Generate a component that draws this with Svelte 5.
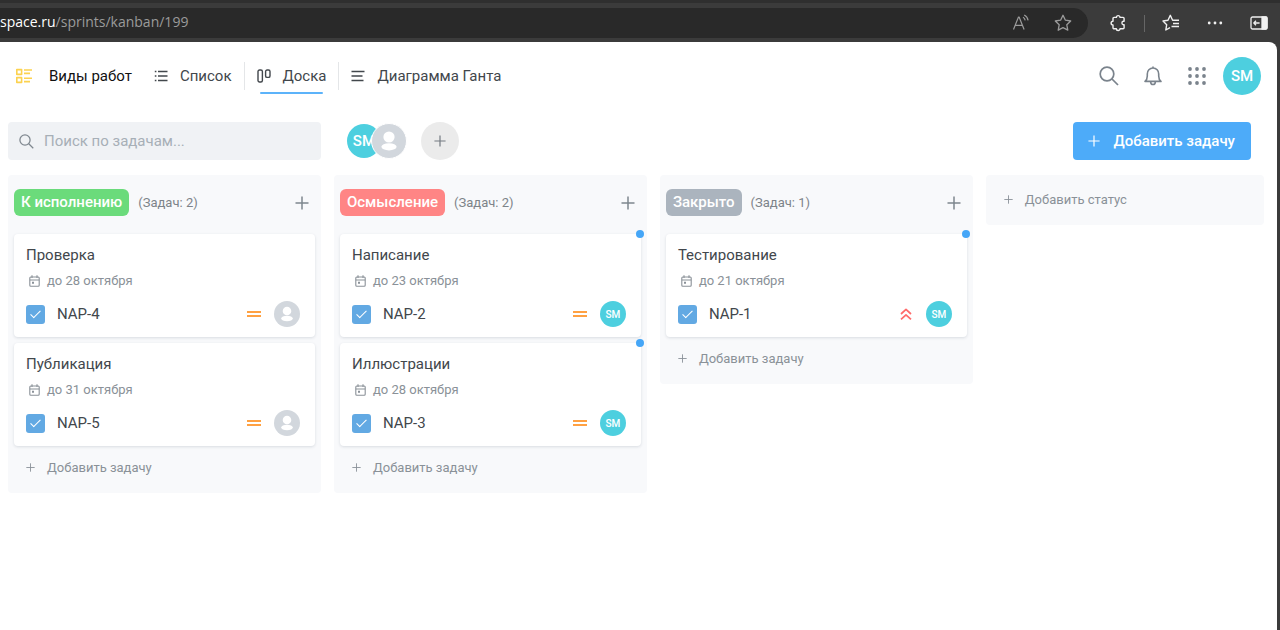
<script>
    const views = [
        { icon: "list", label: "Список" },
        { icon: "board", label: "Доска", active: true },
        { icon: "gantt", label: "Диаграмма Ганта" },
    ];

    let columns = [
        {
            title: "К исполнению",
            color: "#6bdb7b",
            tasks: [
                { id: "NAP-4", title: "Проверка", due: "28 октября", priority: "medium" },
                { id: "NAP-5", title: "Публикация", due: "31 октября", priority: "medium" },
            ],
        },
        {
            title: "Осмысление",
            color: "#ff8585",
            tasks: [
                { id: "NAP-2", title: "Написание", due: "23 октября", priority: "medium", user: "SM", unread: true },
                { id: "NAP-3", title: "Иллюстрации", due: "28 октября", priority: "medium", user: "SM", unread: true },
            ],
        },
        {
            title: "Закрыто",
            color: "#abb4be",
            tasks: [
                { id: "NAP-1", title: "Тестирование", due: "21 октября", priority: "high", user: "SM", unread: true },
            ],
        },
    ];
</script>

{#snippet plus(size)}
    <svg class="icon" width={size} height={size} viewBox="0 0 14 14" stroke-width={size > 12 ? 1.5 : 1.4}>
        <path d="M7 .5v13M.5 7h13" />
    </svg>
{/snippet}

{#snippet magnifier(size)}
    <svg class="icon" width={size} height={size} viewBox="0 0 20 20" stroke-width="1.7">
        <circle cx="8" cy="8" r="6.8" />
        <path d="M13 13l6 6" />
    </svg>
{/snippet}

{#snippet avatar(user, size)}
    <span class="avatar {size}" class:nobody={!user}>
        {#if user}
            {user}
        {:else}
            <svg width="100%" height="100%" viewBox="0 0 34 34" fill="#fff">
                <circle cx="17" cy="13" r="5.6" />
                <ellipse cx="17" cy="22.8" rx="7.6" ry="3.6" />
            </svg>
        {/if}
    </span>
{/snippet}

<div class="browser">
    <div class="browser-bar">
        <div class="address">
            <span class="url"><b>space.ru</b>/sprints/kanban/199</span>
            <button aria-label="Прочесть вслух">
                <svg class="icon" width="18" height="18" viewBox="0 0 18 18" stroke-width="1.2">
                    <path d="M1.5 15.5L6.5 3h.6l5 12.5M3.3 11.3h7M11 3.2c1.2.7 1.9 1.7 2.2 3.1M12.2 1c2.2 1.1 3.5 2.9 3.9 5.3" />
                </svg>
            </button>
            <button aria-label="В избранное">
                <svg class="icon" width="18" height="18" viewBox="0 0 18 18" stroke-width="1.3">
                    <path d="M9 1.3l2.4 4.9 5.3.8-3.9 3.8 1 5.4L9 13.7l-4.8 2.5 1-5.4L1.3 7l5.3-.8z" />
                </svg>
            </button>
        </div>
        <div class="browser-tools">
            <button aria-label="Расширения">
                <svg class="icon" width="18" height="18" viewBox="0 0 18 18" stroke-width="1.4">
                    <path d="M5 3.4h2.4a1.8 1.8 0 0 1 3.600 0h3.100a1 1 0 0 1 1 1v2.900h-.8a1.800 1.800 0 0 0 0 3.500h.8v2.900a1 1 0 0 1-1 1H11a1.800 1.800 0 0 1-3.600 0H5a1 1 0 0 1-1-1V11a1.900 1.900 0 0 1 0-3.800V4.400a1 1 0 0 1 1-1z" />
                </svg>
            </button>
            <span class="divider"></span>
            <button aria-label="Избранное">
                <svg class="icon" width="18" height="18" viewBox="0 0 18 18" stroke-width="1.4">
                    <path d="M8 13.7L3.8 16l.9-5.3L1 7l5-.8L8.3 1.3l2.3 4.9H16M11 9.5h6M9.5 12.5H17M11.5 6.2H17" />
                </svg>
            </button>
            <button aria-label="Меню">
                <svg width="18" height="18" viewBox="0 0 18 18" fill="currentColor">
                    <circle cx="3.2" cy="9" r="1.4" />
                    <circle cx="9" cy="9" r="1.4" />
                    <circle cx="14.8" cy="9" r="1.4" />
                </svg>
            </button>
            <button aria-label="Боковая панель">
                <svg class="icon" width="18" height="18" viewBox="0 0 18 18" stroke-width="1.3">
                    <rect x="1" y="3" width="16" height="12" rx="1.5" />
                    <path d="M12 3h4a1 1 0 0 1 1 1v10a1 1 0 0 1-1 1h-4z" fill="currentColor" />
                    <path d="M9.6 9H4M6 6.7L3.8 9 6 11.3" />
                </svg>
            </button>
        </div>
    </div>

    <main class="page">
        <header class="header">
            <nav class="views">
                <a class="view root" href="#works">
                    <svg class="icon" width="18" height="16" viewBox="0 0 18 16" stroke-width="1.6">
                        <rect x="1.8" y="1.6" width="4.8" height="4.8" />
                        <rect x="1.8" y="9.6" width="4.8" height="4.8" />
                        <path d="M9 2h8M9 5.4h6M9 10.2h8M9 13.6h6" />
                    </svg>
                    Виды работ
                </a>
                {#each views as view}
                    <a class="view" class:active={view.active} href="#{view.icon}">
                        <svg class="icon" width="14" height="14" viewBox="0 0 14 14" stroke-width="1.4">
                            {#if view.icon === "list"}
                                <path d="M4 2.5h9.5M4 7h9.5M4 11.5h9.5M.8 2.5h1.6M.8 7h1.6M.8 11.5h1.6" />
                            {:else if view.icon === "board"}
                                <rect x="1" y="1" width="4.4" height="12" rx="1.5" />
                                <rect x="8.6" y="1" width="4.4" height="7.4" rx="1.5" />
                            {:else}
                                <path d="M.5 2.5h13M.5 7h11M.5 11.5h12" />
                            {/if}
                        </svg>
                        {view.label}
                    </a>
                {/each}
            </nav>
            <div class="tools">
                <button aria-label="Поиск">{@render magnifier(20)}</button>
                <button aria-label="Уведомления">
                    <svg class="icon" width="20" height="20" viewBox="0 0 20 20" stroke-width="1.6">
                        <path d="M2 15.4c1.8-1.4 2.3-2.8 2.3-5.4V8A5.7 5.7 0 0 1 10 2a5.7 5.7 0 0 1 5.7 6v2c0 2.6.5 4 2.3 5.4zM10 .5V2M7.6 15.7c.1 3.8 4.7 3.8 4.8 0" />
                    </svg>
                </button>
                <button aria-label="Приложения">
                    <svg width="20" height="20" viewBox="0 0 20 20" fill="currentColor">
                        {#each [3, 10, 17] as y}
                            {#each [3, 10, 17] as x}
                                <circle cx={x} cy={y} r="1.9" />
                            {/each}
                        {/each}
                    </svg>
                </button>
                {@render avatar("SM", "large")}
            </div>
        </header>

        <div class="toolbar grid">
            <label class="search">
                {@render magnifier(15)}
                <input type="text" placeholder="Поиск по задачам..." aria-label="Поиск по задачам" />
            </label>
            <div class="members">
                {@render avatar("SM", "medium")}
                {@render avatar(null, "medium")}
                <button class="add-member" aria-label="Добавить участника">{@render plus(12)}</button>
            </div>
            <button class="primary">{@render plus(12)} Добавить задачу</button>
        </div>

        <div class="grid">
            {#each columns as column}
                <section class="column">
                    <div class="column-head">
                        <h2 class="status" style="background: {column.color}">{column.title}</h2>
                        <span class="count">(Задач: {column.tasks.length})</span>
                        <button class="column-add" aria-label="Добавить задачу">{@render plus(14)}</button>
                    </div>
                    <div class="cards">
                        {#each column.tasks as task}
                            <article class="card" class:unread={task.unread}>
                                <h3>{task.title}</h3>
                                <div class="due">
                                    <svg class="icon" width="11" height="12" viewBox="0 0 11 12" stroke-width="1.1">
                                        <rect x=".8" y="2" width="9.4" height="9.2" rx="1" />
                                        <path d="M.8 5h9.4M3 .3V3M8 .3V3" />
                                        <path d="M3 7.7h2" stroke-width="2" />
                                    </svg>
                                    до {task.due}
                                </div>
                                <div class="card-foot">
                                    <label>
                                        <input type="checkbox" checked />
                                        {task.id}
                                    </label>
                                    {#if task.priority === "high"}
                                        <svg class="icon high" width="14" height="14" viewBox="0 0 14 14" stroke-width="1.7">
                                            <path d="M2 7l5-4.6L12 7M2 12.4l5-4.6 5 4.6" />
                                        </svg>
                                    {:else}
                                        <svg class="icon medium" width="14" height="14" viewBox="0 0 14 14" stroke-width="2">
                                            <path d="M0 5h14M0 9h14" />
                                        </svg>
                                    {/if}
                                    {@render avatar(task.user, "small")}
                                </div>
                            </article>
                        {/each}
                    </div>
                    <button class="add">{@render plus(9)} Добавить задачу</button>
                </section>
            {/each}
            <button class="add add-status">{@render plus(9)} Добавить статус</button>
        </div>
    </main>
</div>

<style>
    :global(body) {
        margin: 0;
        background: #3b3b3b;
    }

    .browser {
        display: flex;
        flex-direction: column;
        min-height: 100vh;
        font-family: Roboto, sans-serif;
        font-size: 15px;
        color: #42474c;
    }

    button {
        display: flex;
        align-items: center;
        justify-content: center;
        padding: 0;
        border: none;
        background: none;
        color: inherit;
        font: inherit;
        cursor: pointer;
    }

    h2,
    h3 {
        margin: 0;
        font-size: 15px;
        font-weight: 400;
    }

    svg {
        flex-shrink: 0;
    }

    .icon {
        fill: none;
        stroke: currentColor;
        stroke-linejoin: round;
    }

    .browser-bar {
        display: flex;
        align-items: center;
        height: 32px;
        padding: 4px 3px 3px 0;
        border-top: 3px solid #2f2f2f;
    }

    .address {
        display: flex;
        flex: 1;
        align-items: center;
        height: 30px;
        padding-right: 4px;
        border-radius: 0 15px 15px 0;
        background: #292929;
        color: #9b9b9b;
    }

    .address button {
        width: 42px;
    }

    .url {
        flex: 1;
        font-family: "Open Sans", sans-serif;
        font-size: 14px;
        line-height: 18px;
        padding-bottom: 2px;
    }

    .url b {
        font-weight: 400;
        color: #fff;
    }

    .browser-tools {
        display: flex;
        align-items: center;
        gap: 8px;
        padding-left: 12px;
        color: #f0f0f0;
    }

    .browser-tools button {
        width: 36px;
    }

    .divider {
        width: 1px;
        height: 17px;
        background: #666;
    }

    .page {
        flex: 1;
        margin-right: 3px;
        border-top-right-radius: 8px;
        background: #fff;
    }

    .header {
        display: flex;
        align-items: center;
        justify-content: space-between;
        height: 68px;
        padding: 0 16px 0 15px;
    }

    .views,
    .tools {
        display: flex;
        align-items: center;
    }

    .view {
        position: relative;
        display: flex;
        align-items: center;
        gap: 12px;
        height: 28px;
        padding: 0 12px;
        color: #42474c;
        text-decoration: none;
    }

    .view.root {
        gap: 16px;
        padding: 0 22px 0 0;
        color: #111;
    }

    .view.root + .view {
        padding-left: 0;
    }

    .view.root .icon {
        color: #fcd24f;
    }

    .view.active {
        border: solid #e4e6e8;
        border-width: 0 1px;
    }

    .view.active::after {
        content: "";
        position: absolute;
        right: 15px;
        bottom: -4px;
        left: 15px;
        height: 2px;
        border-radius: 1px;
        background: #5cb3fa;
    }

    .tools {
        color: #7a838c;
    }

    .tools button {
        width: 44px;
        height: 44px;
    }

    .tools .avatar {
        margin-left: 4px;
    }

    .avatar {
        display: flex;
        flex-shrink: 0;
        align-items: center;
        justify-content: center;
        border-radius: 50%;
        background: #4dcfdf;
        color: #fff;
        font-weight: 500;
    }

    .avatar.large {
        width: 38px;
        height: 38px;
    }

    .avatar.medium {
        width: 34px;
        height: 34px;
    }

    .avatar.small {
        width: 26px;
        height: 26px;
        font-size: 10px;
    }

    .avatar.nobody {
        background: #d2d7dd;
    }

    .grid {
        display: grid;
        grid-template-columns: repeat(3, minmax(0, 9fr)) minmax(0, 8fr);
        align-items: start;
        gap: 13px;
        padding: 0 13px 24px 8px;
    }

    .toolbar {
        align-items: center;
        padding-top: 12px;
        padding-bottom: 15px;
    }

    .search {
        display: flex;
        align-items: center;
        gap: 10px;
        height: 38px;
        padding: 0 11px;
        border-radius: 4px;
        background: #f0f2f5;
        color: #7f878f;
    }

    .search input {
        flex: 1;
        min-width: 0;
        padding: 0;
        border: none;
        outline: none;
        background: none;
        color: #42474c;
        font: inherit;
    }

    .search input::placeholder {
        color: #a7afb7;
    }

    .members {
        display: flex;
        align-items: center;
        padding-left: 13px;
    }

    .members .nobody {
        margin-left: -10px;
        border: 1px solid #fff;
    }

    .add-member {
        width: 38px;
        height: 38px;
        margin-left: 14px;
        border-radius: 50%;
        background: #ebebeb;
        color: #747b82;
    }

    .primary {
        grid-column: 4;
        justify-self: end;
        gap: 13px;
        height: 38px;
        margin-right: 13px;
        padding: 0 16px 0 15px;
        border-radius: 4px;
        background: #4dabf9;
        color: #fff;
        font-weight: 500;
        white-space: nowrap;
    }

    .column {
        padding: 14px 6px 0;
        border-radius: 4px;
        background: #f8f9fb;
    }

    .column-head {
        display: flex;
        align-items: center;
        gap: 9px;
        margin-bottom: 18px;
    }

    .status {
        padding: 0 7px;
        border-radius: 6px;
        color: #fff;
        font-weight: 500;
        line-height: 27px;
    }

    .count {
        color: #7d8389;
        font-size: 13px;
    }

    .column-add {
        width: 26px;
        height: 26px;
        margin-left: auto;
        color: #7d868e;
    }

    .cards {
        display: flex;
        flex-direction: column;
        gap: 6px;
    }

    .card {
        position: relative;
        padding: 10px 15px 10px 12px;
        border-radius: 4px;
        background: #fff;
        box-shadow: 0 1px 3px rgba(40, 60, 80, 0.15);
    }

    .card.unread::after {
        content: "";
        position: absolute;
        top: -4px;
        right: -3px;
        width: 8px;
        height: 8px;
        border-radius: 50%;
        background: #45a6f7;
    }

    .card h3 {
        line-height: 22px;
    }

    .due {
        display: flex;
        align-items: center;
        gap: 7px;
        margin: 5px 0 10px;
        padding-left: 3px;
        color: #8a9198;
        font-size: 13px;
        line-height: 20px;
    }

    .card-foot {
        display: flex;
        align-items: center;
        gap: 13px;
    }

    .card-foot label {
        display: flex;
        flex: 1;
        align-items: center;
        gap: 12px;
    }

    .card-foot input {
        display: flex;
        justify-content: center;
        appearance: none;
        width: 19px;
        height: 19px;
        margin: 0;
        border-radius: 3px;
        background: #62a9e3;
    }

    .card-foot input:checked::before {
        content: "";
        width: 4px;
        height: 9px;
        margin-top: 3px;
        border: solid #fff;
        border-width: 0 1px 1px 0;
        transform: rotate(45deg);
    }

    .icon.medium {
        color: #ffa142;
    }

    .icon.high {
        color: #ff6b6b;
    }

    .add {
        gap: 12px;
        height: 43px;
        margin-bottom: 4px;
        padding: 0 12px;
        color: #8a9198;
        font-size: 13px;
        white-space: nowrap;
    }

    .add-status {
        justify-content: flex-start;
        height: 50px;
        margin: 0;
        padding: 0 18px 2px;
        border-radius: 4px;
        background: #f8f9fb;
    }
</style>
